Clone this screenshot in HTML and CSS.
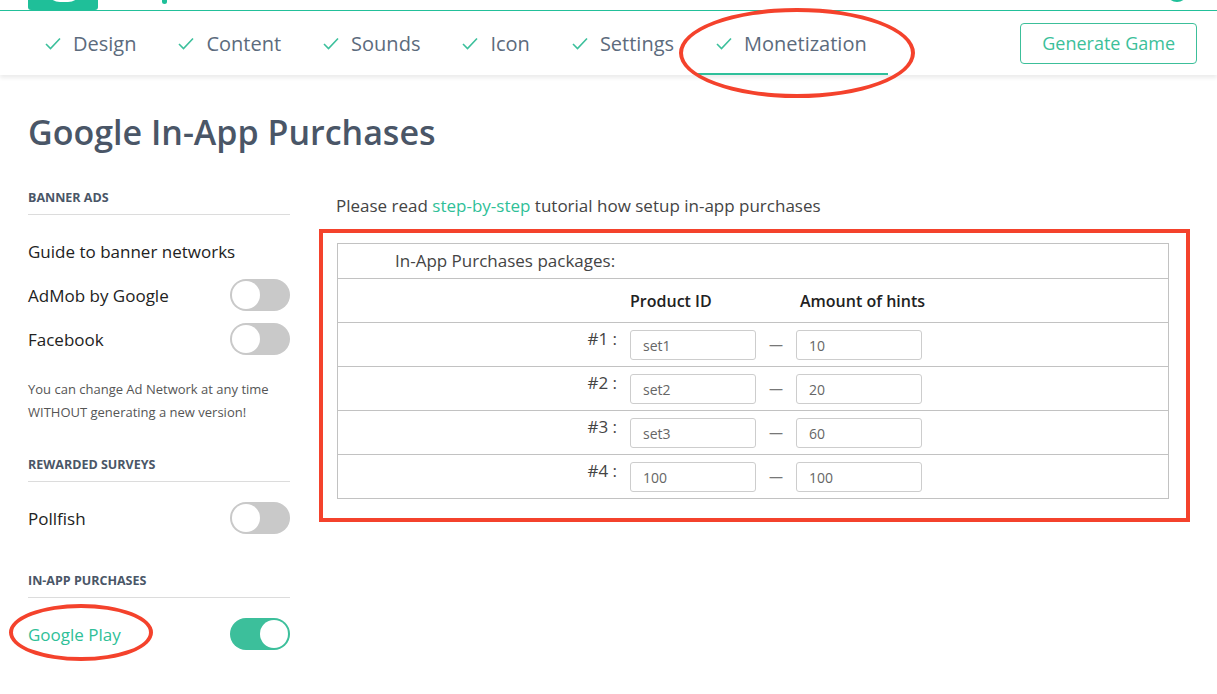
FILE: index.html
```html
<!DOCTYPE html>
<html>
<head>
    <title>Google In-App Purchases</title>
    <link rel="stylesheet" href="styles.css">
</head>
<body>
    <div class="topbar">
        <div class="brand">
            <span class="brand-mark"></span>
            <span class="brand-tail"></span>
        </div>
        <span class="avatar"></span>
    </div>

    <nav class="steps">
        <a class="step"><svg class="tick" viewBox="0 0 16 13"><polyline points="1,7 5.5,11.5 15,1.5"/></svg>Design</a>
        <a class="step"><svg class="tick" viewBox="0 0 16 13"><polyline points="1,7 5.5,11.5 15,1.5"/></svg>Content</a>
        <a class="step"><svg class="tick" viewBox="0 0 16 13"><polyline points="1,7 5.5,11.5 15,1.5"/></svg>Sounds</a>
        <a class="step"><svg class="tick" viewBox="0 0 16 13"><polyline points="1,7 5.5,11.5 15,1.5"/></svg>Icon</a>
        <a class="step"><svg class="tick" viewBox="0 0 16 13"><polyline points="1,7 5.5,11.5 15,1.5"/></svg>Settings</a>
        <a class="step active"><svg class="tick" viewBox="0 0 16 13"><polyline points="1,7 5.5,11.5 15,1.5"/></svg>Monetization<span class="ring ring-tab"></span></a>
        <button class="generate">Generate Game</button>
    </nav>

    <main class="page">
        <h1>Google In-App Purchases</h1>
        <div class="layout">
            <aside class="sidebar">
                <div class="side-head">BANNER ADS</div>
                <ul class="side-list">
                    <li>Guide to banner networks</li>
                    <li>AdMob by Google <span class="switch"></span></li>
                    <li>Facebook <span class="switch"></span></li>
                </ul>
                <p class="side-note">You can change Ad Network at any time<br>WITHOUT generating a new version!</p>

                <div class="side-head">REWARDED SURVEYS</div>
                <ul class="side-list">
                    <li>Pollfish <span class="switch"></span></li>
                </ul>

                <div class="side-head">IN-APP PURCHASES</div>
                <ul class="side-list">
                    <li><span class="side-active">Google Play<span class="ring ring-play"></span></span> <span class="switch on"></span></li>
                </ul>
            </aside>

            <section class="content">
                <p class="intro">Please read <a href="#">step-by-step</a> tutorial how setup in-app purchases</p>
                <div class="packages">
                    <span class="frame"></span>
                    <div class="pk-title">In-App Purchases packages:</div>
                    <div class="pk-head">
                        <span></span>
                        <span>Product ID</span>
                        <span></span>
                        <span class="pk-amount">Amount of hints</span>
                    </div>
                    <div class="pk-row">
                        <span class="pk-num">#1 :</span>
                        <input type="text" value="set1">
                        <span class="pk-dash">—</span>
                        <input type="text" value="10">
                    </div>
                    <div class="pk-row">
                        <span class="pk-num">#2 :</span>
                        <input type="text" value="set2">
                        <span class="pk-dash">—</span>
                        <input type="text" value="20">
                    </div>
                    <div class="pk-row">
                        <span class="pk-num">#3 :</span>
                        <input type="text" value="set3">
                        <span class="pk-dash">—</span>
                        <input type="text" value="60">
                    </div>
                    <div class="pk-row">
                        <span class="pk-num">#4 :</span>
                        <input type="text" value="100">
                        <span class="pk-dash">—</span>
                        <input type="text" value="100">
                    </div>
                </div>
            </section>
        </div>
    </main>
</body>
</html>
```

FILE: styles.css
```css
body {
    margin: 0;
    font-family: "Open Sans", "Liberation Sans", sans-serif;
    color: #222;
    background: #fff;
}
.topbar {
    height: 10px;
    border-bottom: 1px solid #22c09a;
    padding: 0 29px 0 28px;
    display: flex;
    justify-content: space-between;
    overflow: hidden;
}
.brand {
    display: flex;
}
.brand-mark {
    width: 70px;
    height: 10px;
    background: #1fbf99;
    border-radius: 0 0 3px 3px;
    position: relative;
}
.brand-mark::after {
    content: "";
    position: absolute;
    left: 18px;
    top: -12px;
    width: 36px;
    height: 12px;
    border-bottom: 2px solid #fff;
    border-radius: 0 0 18px 18px;
}
.brand-tail {
    width: 5px;
    height: 4px;
    margin-left: 64px;
    background: #1fbf99;
    border-radius: 0 0 3px 3px;
}
.avatar {
    width: 22px;
    height: 22px;
    margin-top: -20px;
    border-radius: 50%;
    background: #1fbf99;
}

.steps {
    height: 64px;
    display: flex;
    align-items: stretch;
    padding: 0 20px 0 24px;
    box-shadow: 0 3px 4px rgba(0, 0, 0, 0.08);
    position: relative;
    z-index: 2;
}
.step {
    display: flex;
    align-items: center;
    gap: 12px;
    padding: 0 21px;
    font-size: 20px;
    color: #5c6b7d;
    position: relative;
    cursor: pointer;
}
.step.active {
    box-shadow: inset 0 -2px 0 #2fc09b;
}
.tick {
    width: 16px;
    height: 13px;
    fill: none;
    stroke: #3cc09c;
    stroke-width: 1.6;
}
.generate {
    margin-left: auto;
    align-self: center;
    height: 41px;
    padding: 0 21px;
    background: #fff;
    border: 1px solid #3cbf9a;
    border-radius: 4px;
    font-family: "Open Sans", "Liberation Sans", sans-serif;
    font-size: 18px;
    color: #3cbf9a;
    cursor: pointer;
}

.ring {
    position: absolute;
    border: 4px solid #f4422c;
    border-radius: 50%;
    pointer-events: none;
}
.ring-tab {
    left: -16px;
    right: -27px;
    top: -3px;
    bottom: -23px;
}
.ring-play {
    left: -19px;
    right: -32px;
    top: -19px;
    bottom: -15px;
}

.page {
    padding: 0 48px 0 28px;
}
h1 {
    margin: 37px 0 38px;
    font-size: 34px;
    line-height: 40px;
    font-weight: 600;
    color: #4a5667;
}
.layout {
    display: grid;
    grid-template-columns: 262px 1fr;
    column-gap: 47px;
}

.side-head {
    font-size: 12.5px;
    line-height: 16px;
    font-weight: 700;
    color: #4a5667;
    padding-bottom: 8px;
    border-bottom: 1px solid #dcdcdc;
}
.side-list {
    list-style: none;
    margin: 14px 0 33px;
    padding: 0;
}
.side-list li {
    height: 44px;
    display: flex;
    align-items: center;
    justify-content: space-between;
    font-size: 17px;
}
.side-active {
    color: #2fbf98;
    position: relative;
}
.side-note {
    margin: 17px 0 33px;
    font-size: 13px;
    line-height: 23px;
    color: #555;
}
.side-list + .side-note {
    margin-top: -16px;
}
.switch {
    width: 60px;
    height: 32px;
    border-radius: 16px;
    background: #c9c9c9;
    position: relative;
}
.switch::after {
    content: "";
    position: absolute;
    left: 2px;
    top: 2px;
    width: 28px;
    height: 28px;
    border-radius: 50%;
    background: #fff;
}
.switch.on {
    background: #3cbf9b;
}
.switch.on::after {
    left: 30px;
}

.intro {
    margin: 4px 0 25px -1px;
    font-size: 17px;
    line-height: 24px;
    color: #444;
}
.intro a {
    color: #2fbf98;
    text-decoration: none;
}
.packages {
    border: 1px solid #c2c2c2;
    position: relative;
    color: #444;
}
.frame {
    position: absolute;
    left: -19px;
    right: -22px;
    top: -15px;
    bottom: -24px;
    border: 4px solid #f4422c;
    pointer-events: none;
}
.pk-title {
    height: 34px;
    line-height: 34px;
    padding-left: 57px;
    font-size: 17px;
    border-bottom: 1px solid #c2c2c2;
}
.pk-head,
.pk-row {
    display: grid;
    grid-template-columns: 292px 126px 40px 126px;
    border-bottom: 1px solid #c2c2c2;
}
.pk-head {
    height: 43px;
    align-items: center;
    font-size: 16px;
    font-weight: 600;
    color: #222;
    white-space: nowrap;
}
.pk-amount {
    padding-left: 4px;
}
.pk-row {
    height: 36px;
    padding-top: 7px;
    align-items: start;
}
.pk-row:last-child {
    border-bottom: none;
}
.pk-num {
    text-align: right;
    padding-right: 13px;
    font-size: 17px;
    line-height: 22px;
    margin-top: -2px;
}
.pk-dash {
    text-align: center;
    line-height: 30px;
    font-size: 14px;
    color: #777;
}
.pk-row input {
    box-sizing: border-box;
    width: 126px;
    height: 30px;
    margin: 0;
    padding: 0 12px;
    border: 1px solid #cdcdcd;
    border-radius: 3px;
    font-family: "Open Sans", "Liberation Sans", sans-serif;
    font-size: 14px;
    color: #666;
}
```
